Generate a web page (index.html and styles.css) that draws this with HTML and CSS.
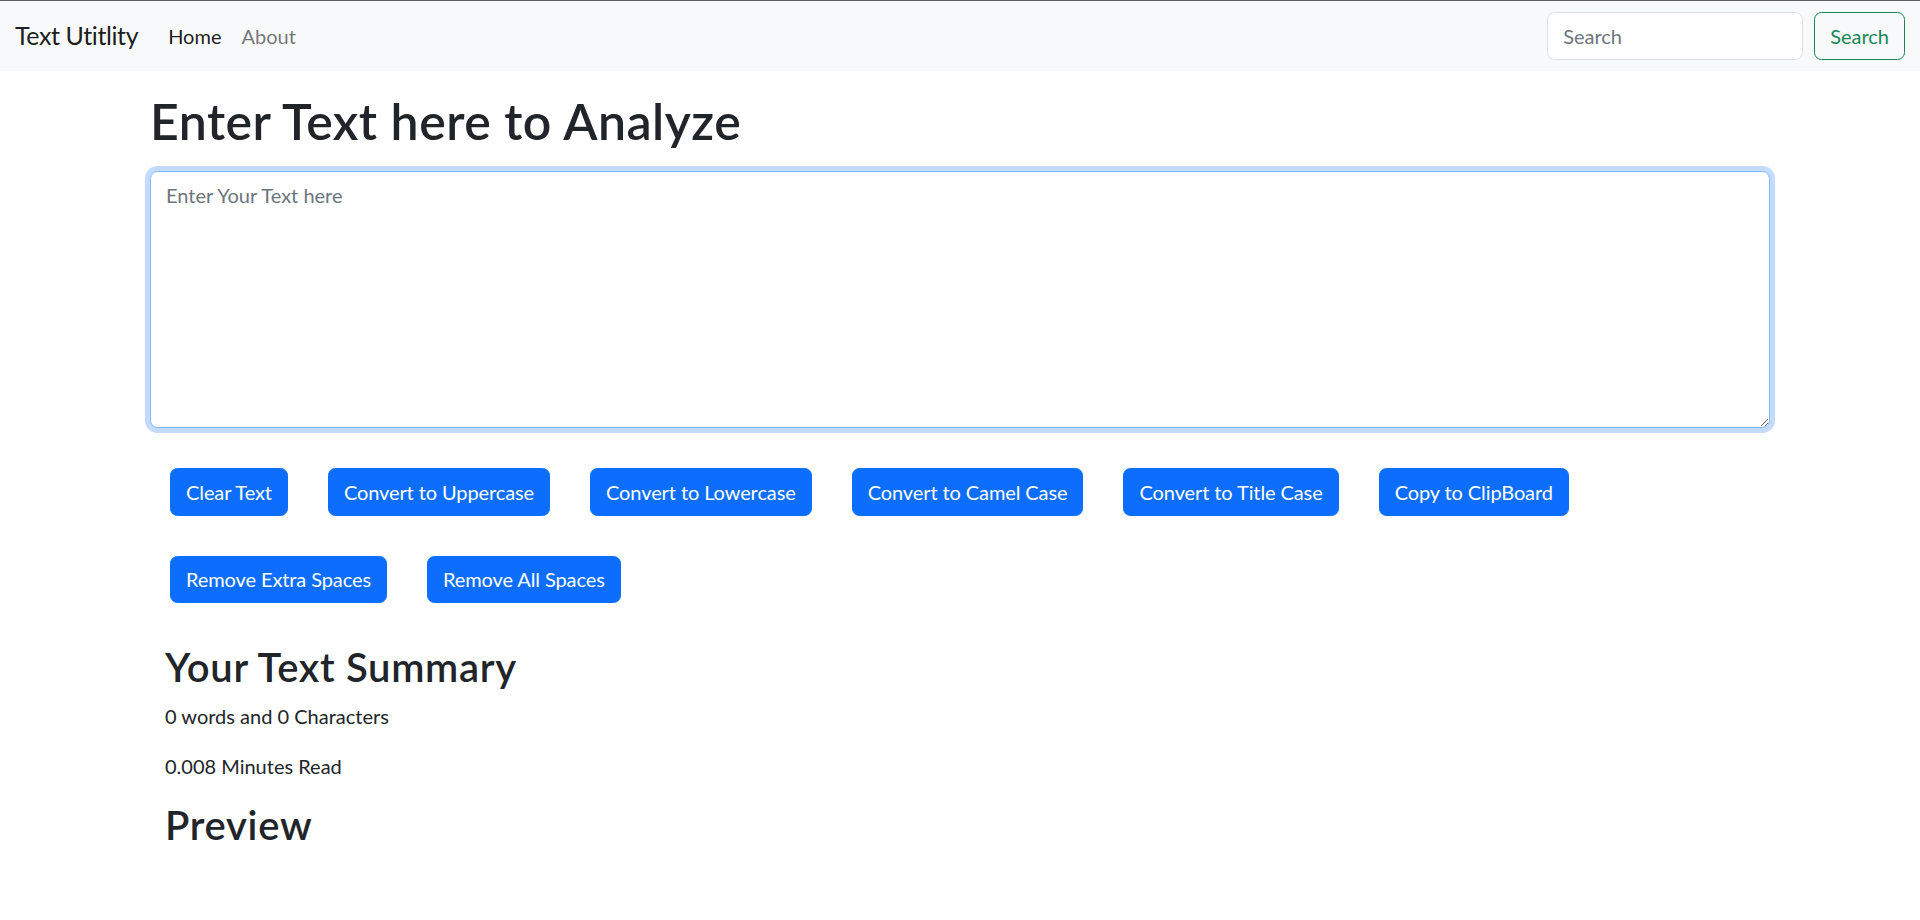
FILE: index.html
```html
<!DOCTYPE html>
<html lang="en">
<head>
<meta charset="utf-8">
<title>Text Utitlity</title>
<link rel="stylesheet" href="styles.css">
</head>
<body>
<nav class="navbar">
  <a class="brand" href="#">Text Utitlity</a>
  <ul class="nav-links">
    <li><a class="nav-link active" href="#">Home</a></li>
    <li><a class="nav-link" href="#">About</a></li>
  </ul>
  <form class="search">
    <input class="search-input" type="search" placeholder="Search">
    <button class="btn-outline" type="button">Search</button>
  </form>
</nav>
<main class="page">
  <h1 class="title">Enter Text here to Analyze</h1>
  <div class="field">
    <textarea class="text-box" rows="8" placeholder="Enter Your Text here"></textarea>
  </div>
  <div class="actions">
    <button class="btn" type="button">Clear Text</button>
    <button class="btn" type="button">Convert to Uppercase</button>
    <button class="btn" type="button">Convert to Lowercase</button>
    <button class="btn" type="button">Convert to Camel Case</button>
    <button class="btn" type="button">Convert to Title Case</button>
    <button class="btn" type="button">Copy to ClipBoard</button>
    <button class="btn" type="button">Remove Extra Spaces</button>
    <button class="btn" type="button">Remove All Spaces</button>
  </div>
  <section class="summary">
    <h2 class="subtitle">Your Text Summary</h2>
    <p class="stat">0 words and 0 Characters</p>
    <p class="stat">0.008 Minutes Read</p>
    <h2 class="subtitle">Preview</h2>
    <p class="stat"></p>
  </section>
</main>
</body>
</html>
```
FILE: styles.css
```css
* { box-sizing: border-box; }
html, body { margin: 0; padding: 0; }
body {
  font-family: Lato, "Liberation Sans", sans-serif;
  font-size: 20px;
  line-height: 1.5;
  color: #212529;
  background: #fff;
}
.navbar {
  display: flex;
  align-items: center;
  background: #f8f9fa;
  border-top: 1px solid #5f5f5f;
  padding: 10px 15px;
}
.brand {
  font-size: 25px;
  line-height: 1.5;
  padding: 6.25px 0;
  margin-right: 20px;
  letter-spacing: -0.4px;
  color: rgba(0,0,0,.9);
  text-decoration: none;
}
.nav-links {
  display: flex;
  list-style: none;
  margin: 0;
  padding: 0;
}
.nav-link {
  display: block;
  padding: 10px;
  color: rgba(0,0,0,.55);
  text-decoration: none;
}
.nav-link.active { color: rgba(0,0,0,.9); }
.search {
  display: flex;
  margin-left: auto;
}
.search-input {
  width: 256px;
  height: 47.5px;
  padding: 7.5px 15px;
  font: inherit;
  color: #212529;
  background: #fff;
  border: 1px solid #dee2e6;
  border-radius: 7.5px;
  margin-right: 11px;
  outline: none;
}
.search-input::placeholder { color: #6c757d; }
.btn-outline {
  font: inherit;
  height: 47.5px;
  padding: 7.5px 15px;
  color: #198754;
  background: transparent;
  border: 1px solid #198754;
  border-radius: 7.5px;
}
.page {
  width: 1620px;
  margin: 20px auto 0;
}
.title {
  margin: 0;
  font-size: 50px;
  line-height: 1.2;
  font-weight: 600;
  letter-spacing: 0.5px;
}
.field {
  margin: 20px 0;
}
.text-box {
  display: block;
  width: 100%;
  height: 257px;
  padding: 7.5px 15px;
  font: inherit;
  color: #212529;
  background: #fff;
  border: 1px solid #86b7fe;
  border-radius: 7.5px;
  box-shadow: 0 0 0 5px rgba(13,110,253,.25);
  outline: none;
}
.text-box::placeholder { color: #6c757d; }
.actions {
  display: flex;
  flex-wrap: wrap;
  width: 1450px;
}
.btn {
  margin: 20px;
  height: 47.5px;
  padding: 7.5px 15px;
  font: inherit;
  letter-spacing: -0.1px;
  color: #fff;
  background: #0d6efd;
  border: 1px solid #0d6efd;
  border-radius: 7.5px;
}
.summary {
  margin-top: 20px;
  padding: 0 15px;
}
.subtitle {
  margin: 0 0 10px;
  font-size: 40px;
  line-height: 1.2;
  font-weight: 600;
  letter-spacing: 0.7px;
}
.stat {
  margin: 0 0 20px;
}
```
